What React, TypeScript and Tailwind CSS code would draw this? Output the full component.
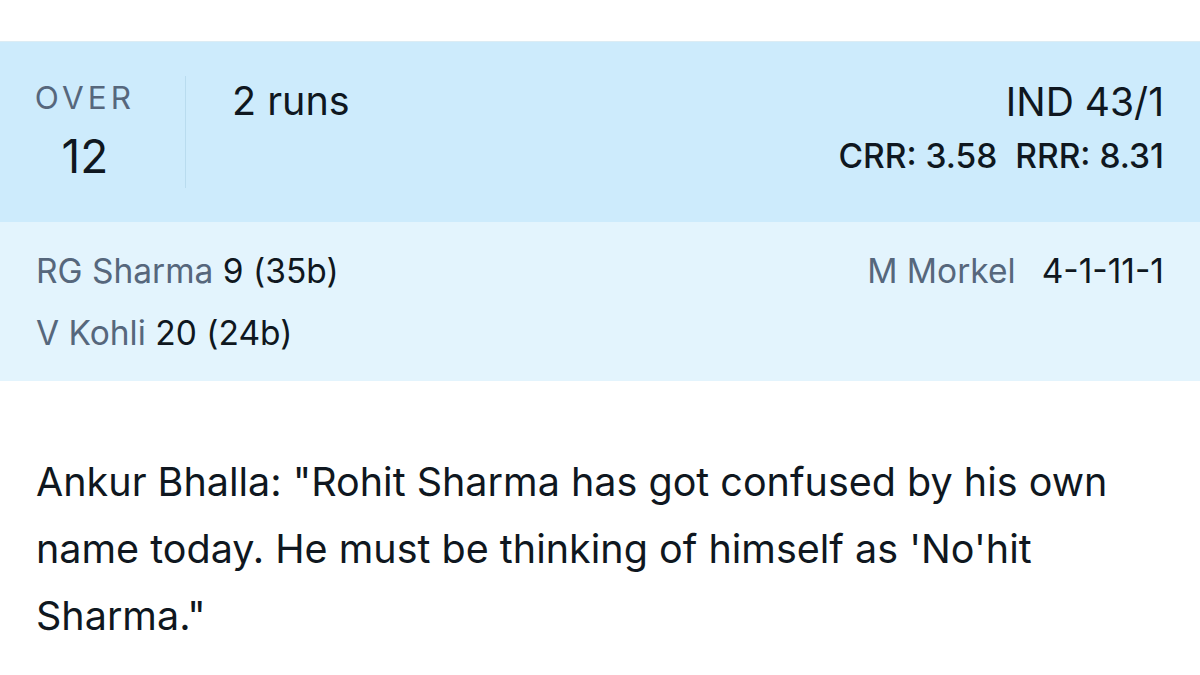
export default function App() {
  return (
    <div className="min-h-screen w-full bg-white text-[#0f1720]" style={{ fontFamily: 'Inter, "Noto Sans", sans-serif' }}>
      <div className="h-[41px] bg-white" />
      <div className="flex h-[181px] items-start border-t border-[#dcecf4] bg-[#cdebfc] px-[36px]">
        <div className="flex w-[98px] flex-col items-center pt-[40px]">
          <span className="text-[31.5px] leading-none tracking-[0.13em] text-[#56677c]">OVER</span>
          <span className="mt-[19px] text-[46px] leading-none">12</span>
        </div>
        <div className="mt-[34px] ml-[51px] h-[112px] w-px bg-[#b9dcef]" />
        <div className="ml-[46px] pt-[40px] text-[39.5px] leading-none">2 runs</div>
        <div className="ml-auto flex flex-col items-end pt-[40px]">
          <span className="text-[39px] leading-none">IND 43/1</span>
          <span className="mt-[19px] text-[33.5px] font-medium leading-none">CRR: 3.58&nbsp;&nbsp;RRR: 8.31</span>
        </div>
      </div>
      <div className="flex h-[159px] items-start justify-between bg-[#e3f4fd] px-[36px] pt-[18px] text-[33.5px] leading-[62px]">
        <div className="flex flex-col">
          <div>
            <span className="text-[#56677c]">RG Sharma</span> 9 (35b)
          </div>
          <div>
            <span className="text-[#56677c]">V Kohli</span> 20 (24b)
          </div>
        </div>
        <div className="flex gap-[26px]">
          <span className="text-[#56677c]">M Morkel</span>
          <span>4-1-11-1</span>
        </div>
      </div>
      <p className="px-[36px] pt-[68px] text-[39.5px] leading-[67px]">
        Ankur Bhalla: "Rohit Sharma has got confused by his own name today. He must be thinking of himself as 'No'hit Sharma."
      </p>
    </div>
  );
}
